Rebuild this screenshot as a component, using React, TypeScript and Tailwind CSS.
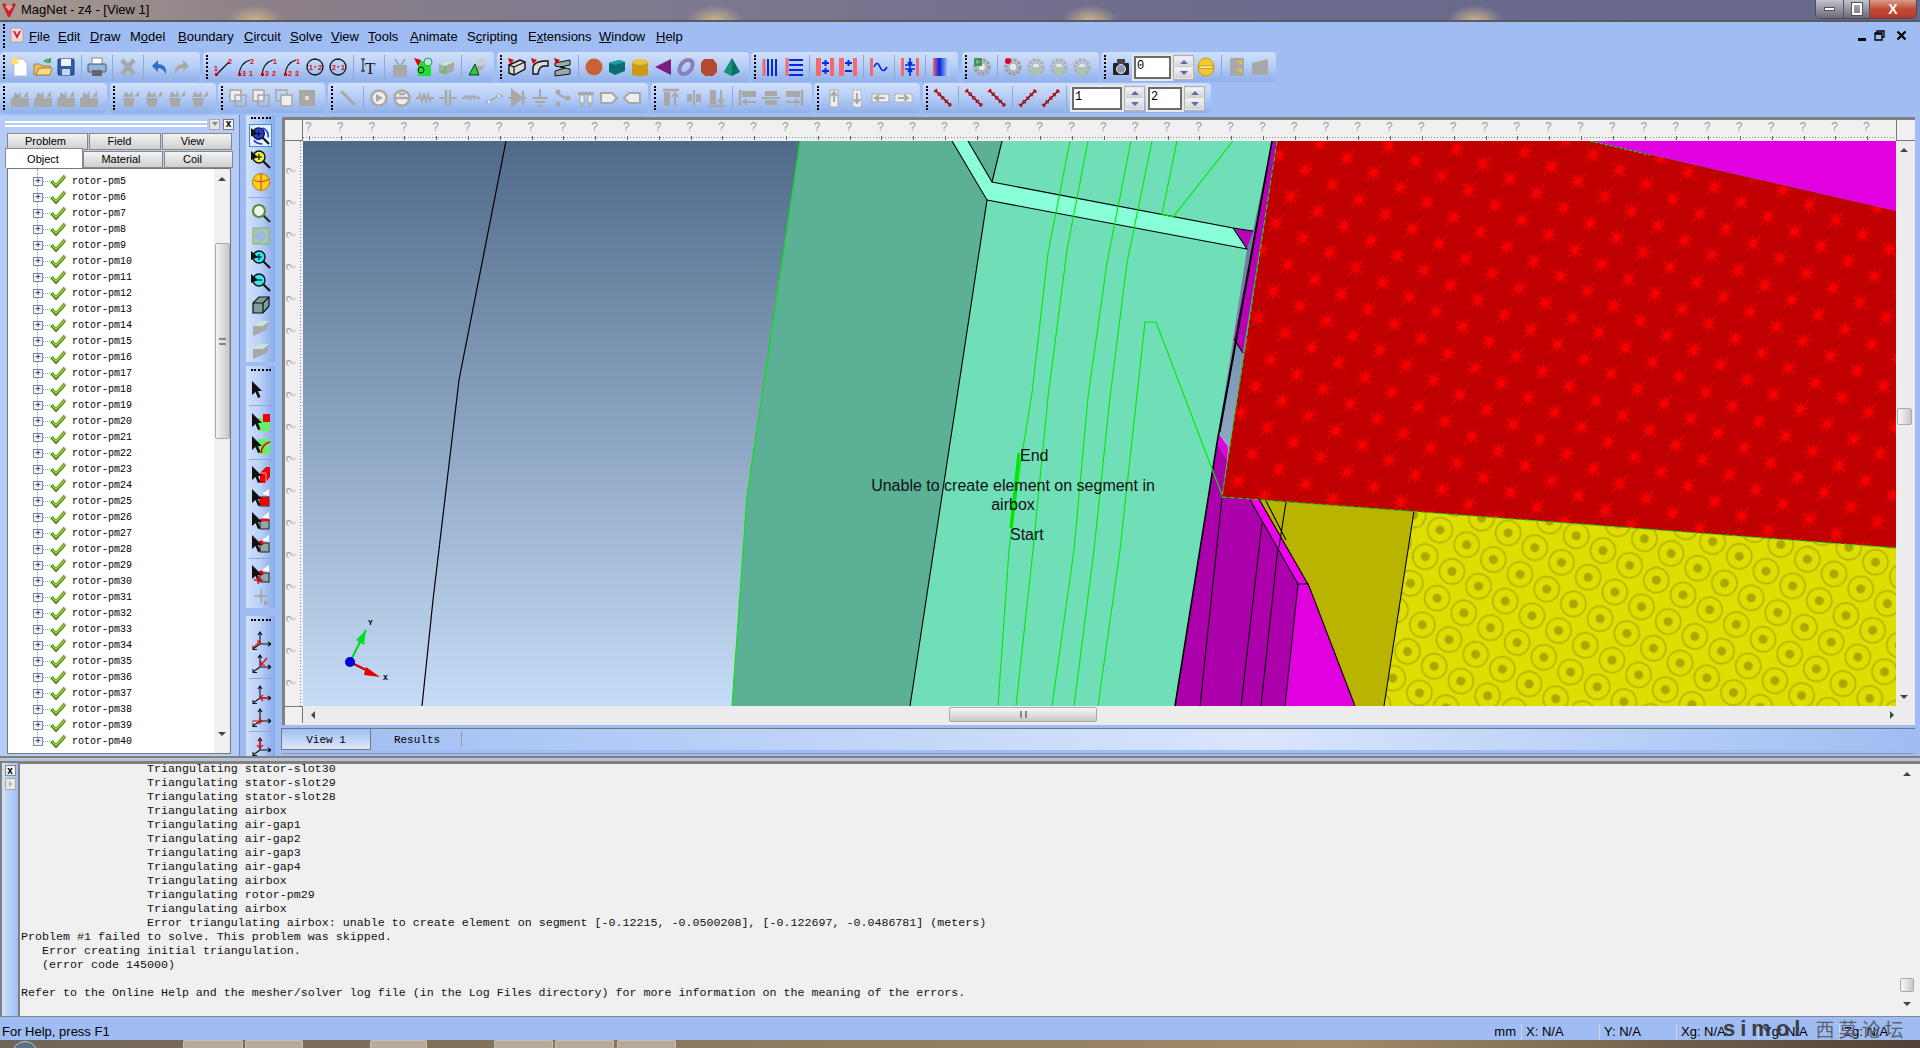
import type { ReactNode } from 'react';

const G = '#a8a8a8';

const num = (x: number, y: number, t: string, c = '#e00000') => (
  <text x={x} y={y} fontSize="7" fill={c} fontFamily="Liberation Sans" fontWeight="bold">{t}</text>
);

const arc = (a: string, b: string, c: string) => (
  <>
    <path d="M3 18 Q4 6 14 3" fill="none" stroke="#111" strokeWidth="1.3" />
    <rect x="2" y="16" width="3" height="3" fill="#e00000" />
    {num(14, 7, a)}{num(6, 19, b)}{num(13, 19, c)}
  </>
);

const circ = (a: string, b: string) => (
  <>
    <circle cx="10" cy="10" r="8" fill="none" stroke="#111" strokeWidth="1.3" />
    {num(4, 13, a)}{num(13, 13, b)}
    <rect x="9.5" y="9" width="1.5" height="1.5" fill="#e00000" />
  </>
);

const gear = (c: string, extra?: ReactNode) => (
  <>
    <circle cx="10" cy="10" r="7" fill="none" stroke={c} strokeWidth="3.5" strokeDasharray="3 1.2" />
    <circle cx="10" cy="10" r="4" fill="#e8e8e8" stroke={c} />
    {extra}
  </>
);

const redSide = (
  <rect x="1" y="1" width="5" height="18" fill="#f46a6a" />
);

const grey3 = (
  <>
    <rect x="1" y="10" width="18" height="9" fill={G} />
    <path d="M3 10 L5 4 L8 7 L10 3 L11 10 Z M13 9 L18 3 L18 9 Z" fill={G} />
  </>
);

const grey4 = (
  <>
    <path d="M3 10H15L13 19H5Z" fill={G} />
    <path d="M3 9 L6 3 L9 7 L12 3 L13 9 Z M14 9 L19 3 L19 8 Z" fill={G} />
  </>
);

const copy = (f: string) => (
  <>
    <rect x="2" y="2" width="11" height="11" fill="#eee" stroke={G} strokeWidth="1.6" />
    <rect x="7" y="7" width="11" height="11" fill={f} stroke={G} strokeWidth="1.6" />
  </>
);

const mag = (c: string, sign?: string) => (
  <>
    <path d="M11 11L19 19" stroke="#111" strokeWidth="2.2" />
    <circle cx="8" cy="8" r="6" fill={c} stroke="#111" strokeWidth="1.4" />
    <path d="M0 2L7 8L0 11Z" fill="#111" />
    {sign === '+' && <path d="M5 8H11M8 5V11" stroke="#111" strokeWidth="1.2" />}
    {sign === '-' && <path d="M5 8H11" stroke="#111" strokeWidth="1.2" />}
  </>
);

const arrow = <path d="M1 1V15L4.5 12L7 18L9.5 17L7 11H11Z" fill="#111" />;

const sel = (body: ReactNode) => (
  <>
    {body}
    {arrow}
  </>
);

const boxCut = (
  <>
    <path d="M11 6L18 1V8Z" fill="#fff" />
    <rect x="9" y="9" width="9" height="9" fill="#8fa8a4" stroke="#222" />
  </>
);

const axes = (red: string) => (
  <>
    <path d="M9 14V3M7 5L9 2L11 5M9 14H19M17 12L20 14L17 16M9 14L2 19M2 16V19.5H6" fill="none" stroke="#111" strokeWidth="1.1" />
    <path d={red} fill="none" stroke="#f00000" strokeWidth="1.2" />
  </>
);

const cross = (d: string) => (
  <>
    <path d={d} stroke="#111" strokeWidth="1.2" />
    <path d={d} stroke="#f00000" strokeWidth="4" strokeDasharray="2 3" />
  </>
);

const ICONS: Record<string, ReactNode> = {
  new: (<><path d="M4 2H13L17 6V19H4Z" fill="#fff" stroke="#bbb" /><circle cx="5" cy="4" r="3.5" fill="#ffe060" /></>),
  open: (<><path d="M1 7H7L9 9H17V18H1Z" fill="#e8c060" stroke="#a88430" /><path d="M3 18L6 11H19L17 18Z" fill="#f6d98a" stroke="#a88430" /><path d="M11 5Q14 1 17 4M17 1V5H13" fill="none" stroke="#3c9a3c" strokeWidth="1.6" /></>),
  save: (<><rect x="2" y="2" width="16" height="16" rx="1" fill="#2f5fa8" stroke="#173a73" /><rect x="5" y="2" width="10" height="7" fill="#eef2fa" /><rect x="6" y="12" width="8" height="6" fill="#c9d4e8" /></>),
  print: (<><rect x="5" y="1" width="10" height="7" fill="#fff" stroke="#888" /><rect x="1" y="7" width="18" height="8" rx="1" fill="#8fb5e0" stroke="#555" /><rect x="5" y="13" width="10" height="6" fill="#666" /></>),
  del: (<path d="M4 3L16 17M16 3L4 17" stroke={G} strokeWidth="4.5" />),
  undo: (<path d="M3 9L9 3V7Q18 7 17 17Q14 11 9 11V15Z" fill="#2f6fc0" />),
  redo: (<path d="M17 9L11 3V7Q2 7 3 17Q6 11 11 11V15Z" fill={G} />),
  line: (<><path d="M3 18L16 5" stroke="#111" strokeWidth="1.3" /><rect x="2" y="16" width="3" height="3" fill="#e00000" />{num(1, 14, '1')}{num(15, 7, '2')}</>),
  a1: arc('2', '3', '1'),
  a2: arc('1', '3', '2'),
  a3: arc('1', '2', '3'),
  c1: circ('1', '2'),
  c2: circ('2', '1'),
  text: (<><text x="6" y="17" fontSize="17" fontFamily="Liberation Serif" fill="#111">T</text><path d="M2 2H6M4 2V14M2 14H6" stroke="#111" /></>),
  g1: (<path d="M5 2L9 8M15 2L11 8M4 9H16V19H4Z" fill={G} stroke={G} strokeWidth="2" />),
  sg: (<><rect x="5" y="4" width="13" height="15" fill="#22dd33" /><circle cx="15" cy="5" r="4" fill="#b8e0f0" stroke="#2a2" /><path d="M1 1L8 3L5 9Z" fill="#e00000" /><circle cx="8" cy="13" r="3" fill="none" stroke="#111" /></>),
  g2: (<><path d="M3 7L12 3L18 5V14L9 18L3 15Z" fill={G} /><path d="M12 3L18 5L9 9L3 7Z" fill="#cfe0dc" /><path d="M3 15H9V9" fill="none" stroke="#4c4" strokeWidth="1.6" /></>),
  tool: (<><path d="M4 17L14 5L18 9L8 19Z" fill="#b0b0b0" /><circle cx="14" cy="5" r="4" fill="#ccc" /><path d="M2 18L8 7L12 18Z" fill="#22cc33" stroke="#111" strokeWidth=".8" /></>),
  ext: (<><path d="M2 8L13 3L18 5V12L7 18L2 16Z" fill="#ddd" stroke="#111" strokeWidth="1.4" /><path d="M2 8L7 10V18M7 10L18 5" fill="none" stroke="#111" strokeWidth="1.2" /><path d="M1 1L7 3L3 7Z" fill="#e00000" /></>),
  rev: (<><path d="M3 17V10Q4 5 14 4H18V9H14Q9 9 8 17Z" fill="#ddd" stroke="#111" strokeWidth="1.4" /><path d="M1 1L7 3L3 7Z" fill="#e00000" /></>),
  swp: (<><path d="M2 6L17 3V8L7 10L17 12V17L2 19V14L12 11L2 9Z" fill="#9aa" stroke="#111" /><path d="M1 1L7 3L3 7Z" fill="#e00000" /></>),
  sph: (<circle cx="10" cy="10" r="8.5" fill="#c86038" />),
  cube: (<><path d="M2 6L12 3L18 5V14L8 18L2 15Z" fill="#0c6e70" /><path d="M2 6L12 3L18 5L8 8Z" fill="#18a0a2" /></>),
  cyl: (<><rect x="2" y="5" width="16" height="12" fill="#c89a18" /><ellipse cx="10" cy="5" rx="8" ry="3" fill="#e8c040" /><ellipse cx="10" cy="17" rx="8" ry="2" fill="#c89a18" /></>),
  cone: (<path d="M18 2L2 10L18 18Z" fill="#7c1c7c" />),
  tor: (<ellipse cx="10" cy="10" rx="5.5" ry="8" transform="rotate(40 10 10)" fill="none" stroke="#8880b8" strokeWidth="4" />),
  pol: (<path d="M5 2H14L18 7V15L14 19H6L2 15V6Z" fill="#b84830" />),
  pyr: (<><path d="M10 1L18 15L10 19L2 15Z" fill="#0c7060" /><path d="M10 1L2 15L10 19Z" fill="#18907c" /></>),
  bars: (<><path d="M3 2V19" stroke="#f46a6a" strokeWidth="3" /><path d="M7 2V19M11 2V19M15 2V19" stroke="#0028e8" strokeWidth="2" /></>),
  lines: (<><path d="M3 1V19" stroke="#f46a6a" strokeWidth="3" /><path d="M5 3H19M5 8H19M5 13H19M5 18H19" stroke="#0028e8" strokeWidth="2" /></>),
  pp: (<>{redSide}<rect x="15" y="1" width="4" height="18" fill="#f46a6a" /><path d="M7 6H14M10.5 3V9M7 14H14M10.5 11V17" stroke="#0028e8" strokeWidth="2" /></>),
  pm: (<>{redSide}<rect x="15" y="1" width="4" height="18" fill="#f46a6a" /><path d="M7 6H14M10.5 3V9M7 14H14" stroke="#0028e8" strokeWidth="2" /></>),
  wave: (<><rect x="1" y="1" width="3" height="18" fill="#f46a6a" /><path d="M5 10Q8 3 11 10T18 10" fill="none" stroke="#0028e8" strokeWidth="1.6" /></>),
  conv: (<><rect x="1" y="1" width="3" height="18" fill="#f46a6a" /><rect x="16" y="1" width="3" height="18" fill="#f46a6a" /><path d="M10 1V19M5 8H15M5 12H15M8 5L10 8L12 5M8 15L10 12L12 15" fill="none" stroke="#0028e8" strokeWidth="1.6" /></>),
  grad: (<rect x="2" y="1" width="16" height="18" fill="url(#gradIcon)" />),
  gplay: gear('#a0a0a0', <path d="M2 1H10V9H2Z M4 3V7L8 5Z" fill="#3a9a4a" fillRule="evenodd" />),
  grec: gear('#a0a0a0', <circle cx="5" cy="4" r="3" fill="#e00020" />),
  gdis: gear('#b0b0b0', <rect x="7" y="10" width="6" height="8" fill="#a8c8a8" />),
  cam: (<><rect x="2" y="6" width="16" height="12" rx="1" fill="#222" /><rect x="6" y="2" width="8" height="5" fill="#444" /><circle cx="10" cy="12" r="4.5" fill="#8899bb" stroke="#eee" /></>),
  yel: (<><ellipse cx="10" cy="10" rx="8" ry="9" fill="#f2c830" stroke="#d09a10" /><rect x="3" y="9" width="14" height="2.5" fill="#fff0a0" stroke="#a07808" strokeWidth=".6" /></>),
  film: (<><rect x="3" y="1" width="14" height="18" rx="1" fill="#a8a8a8" /><path d="M9 4H15V8ZM9 12H15V16Z" fill="#f0c030" /></>),
  clap: (<path d="M2 6L18 2V18H2Z" fill={G} />),
  gg1: grey3,
  gg2: grey4,
  cp1: copy('none'),
  cp2: copy('none'),
  cp3: (<><rect x="2" y="2" width="11" height="11" fill="none" stroke={G} strokeWidth="1.6" /><rect x="7" y="7" width="11" height="11" fill="#eee" stroke={G} strokeWidth="1.6" /></>),
  cp4: (<><rect x="2" y="2" width="16" height="16" fill={G} /><rect x="8" y="8" width="4" height="4" fill="#ddd" /></>),
  wrench: (<path d="M4 4L16 16" stroke={G} strokeWidth="3" strokeLinecap="round" />),
  src: (<><circle cx="10" cy="10" r="7.5" fill="#eee" stroke={G} strokeWidth="2.4" /><path d="M7 6V14L14 10Z" fill={G} /></>),
  src2: (<><circle cx="10" cy="10" r="7.5" fill="#eee" stroke={G} strokeWidth="2.4" /><path d="M3 10H17M7 6H13" stroke={G} strokeWidth="2.4" /></>),
  res: (<path d="M1 10H4L5 7L7 13L9 7L11 13L13 7L15 13L16 10H19" fill="none" stroke={G} strokeWidth="2" />),
  cap: (<path d="M1 10H8M8 2V18M12 2V18M12 10H19" fill="none" stroke={G} strokeWidth="2.2" />),
  coil: (<path d="M1 10H4Q5 6 7 10Q8 6 10 10Q11 6 13 10Q14 6 16 10H19" fill="none" stroke={G} strokeWidth="2" />),
  sw: (<><path d="M1 14H5M15 8H19M6 13L14 8" stroke={G} strokeWidth="2" /><circle cx="5" cy="14" r="2" fill="#eee" stroke={G} /><circle cx="15" cy="8" r="2" fill="#eee" stroke={G} /></>),
  dio: (<path d="M1 10H19M5 2V18L15 10ZM16 3V17" fill={G} stroke={G} strokeWidth="2" />),
  gnd: (<path d="M10 1V10M2 10H18M5 14H15M8 18H12" stroke={G} strokeWidth="2" />),
  sw2: (<><circle cx="5" cy="4" r="2.5" fill={G} /><circle cx="15" cy="10" r="2.5" fill={G} /><circle cx="5" cy="16" r="2.5" fill={G} /><path d="M5 6L13 10" stroke={G} strokeWidth="2" /></>),
  rel: (<><rect x="2" y="4" width="16" height="3" fill={G} /><rect x="4" y="7" width="4" height="8" fill="#eee" stroke={G} /><rect x="12" y="7" width="4" height="8" fill="#eee" stroke={G} /><path d="M6 15V19M14 15V19" stroke={G} strokeWidth="2" /></>),
  tagr: (<path d="M2 5H13L18 10L13 15H2Z" fill="#eee" stroke={G} strokeWidth="2.2" />),
  tagl: (<path d="M18 5H7L2 10L7 15H18Z" fill="#eee" stroke={G} strokeWidth="2.2" />),
  al1: (<><path d="M2 2H18" stroke={G} strokeWidth="2.5" /><rect x="3" y="4" width="6" height="14" fill={G} /><path d="M14 18V6M11 9L14 5L17 9" fill="none" stroke={G} strokeWidth="2" /></>),
  al2: (<><rect x="3" y="6" width="5" height="8" fill={G} /><rect x="12" y="6" width="5" height="8" fill={G} /><path d="M10 2V18" stroke={G} strokeWidth="2" /></>),
  al3: (<><path d="M2 18H18" stroke={G} strokeWidth="2.5" /><rect x="3" y="2" width="6" height="14" fill={G} /><path d="M14 2V14M11 11L14 15L17 11" fill="none" stroke={G} strokeWidth="2" /></>),
  al4: (<><path d="M2 2V18" stroke={G} strokeWidth="2.5" /><rect x="4" y="3" width="14" height="6" fill={G} /><path d="M18 14H6M9 11L5 14L9 17" fill="none" stroke={G} strokeWidth="2" /></>),
  al5: (<><rect x="4" y="3" width="12" height="5" fill={G} /><rect x="4" y="12" width="12" height="5" fill={G} /><path d="M1 10H19" stroke={G} strokeWidth="2" /></>),
  al6: (<><path d="M18 2V18" stroke={G} strokeWidth="2.5" /><rect x="2" y="3" width="14" height="6" fill={G} /><path d="M2 14H14M11 11L15 14L11 17" fill="none" stroke={G} strokeWidth="2" /></>),
  sz1: (<><rect x="6" y="2" width="8" height="17" fill="#eee" stroke={G} /><path d="M10 14V5M7 8L10 4L13 8" fill="none" stroke={G} strokeWidth="2" /></>),
  sz2: (<><rect x="6" y="2" width="8" height="17" fill="#eee" stroke={G} strokeDasharray="2 1" /><path d="M10 5V14M7 11L10 15L13 11" fill="none" stroke={G} strokeWidth="2" /></>),
  sz3: (<><rect x="2" y="6" width="17" height="8" fill="#eee" stroke={G} /><path d="M15 10H6M9 7L5 10L9 13" fill="none" stroke={G} strokeWidth="2" /></>),
  sz4: (<><rect x="2" y="6" width="17" height="8" fill="#eee" stroke={G} strokeDasharray="2 1" /><path d="M5 10H14M11 7L15 10L11 13" fill="none" stroke={G} strokeWidth="2" /></>),
  xd: cross('M2 2L18 18'),
  xd2: cross('M2 2L18 18'),
  xu: cross('M2 18L18 2'),
  // vertical toolbar
  vrot: (<>{mag('#2040e0', '+')}<path d="M12 2Q19 5 18 12M3 15Q6 19 12 19" fill="none" stroke="#1030f0" strokeWidth="1.6" /></>),
  vyel: mag('#e8f040', '+'),
  vball: (<><circle cx="10" cy="10" r="8.5" fill="#f8d020" stroke="#b08000" /><path d="M10 2V18M3 8Q10 12 18 7" fill="none" stroke="#e83020" /></>),
  vmag: (<><path d="M12 12L19 19" stroke="#333" strokeWidth="2.4" /><circle cx="8" cy="8" r="6" fill="#eef4e8" stroke="#5c8a3c" strokeWidth="2.2" /></>),
  vfit: (<><rect x="2" y="2" width="16" height="16" fill="#a8cca0" stroke="#8aaa88" /><path d="M10 3L17 10L10 17L3 10Z" fill="#9cb8e0" /></>),
  vin: mag('#30e8f0', '+'),
  vout: mag('#30e8f0', '-'),
  vbox: (<><path d="M2 8L8 2H18V11L12 18H2Z" fill="#7f9f9c" stroke="#111" strokeWidth="1.2" /><path d="M2 8H12V18M12 8L18 2" fill="none" stroke="#111" strokeWidth="1.2" /></>),
  vg: (<><path d="M2 8L18 3L16 12L2 18Z" fill={G} /><path d="M2 8L8 3H18L12 8Z" fill="#c8e4dc" /></>),
  varrow: arrow,
  s1: sel(<><rect x="7" y="6" width="12" height="13" fill="#66ee66" /><path d="M12 2H19V10H12Z" fill="#f00000" /></>),
  s2: sel(<><rect x="7" y="4" width="12" height="15" fill="#66ee66" /><path d="M19 7Q11 9 10 18" fill="none" stroke="#f00000" strokeWidth="1.6" /></>),
  s3: sel(<><path d="M9 8L15 2H19V12L14 18H9Z" fill="#f00000" /><path d="M9 8H15V18" fill="none" stroke="#ffaaaa" /></>),
  s4: sel(<>{boxCut}<rect x="9" y="9" width="9" height="9" fill="#f00000" /></>),
  s5: sel(<>{boxCut}<path d="M9 9H18" stroke="#f00000" strokeWidth="2.5" /></>),
  s6: sel(<>{boxCut}<circle cx="10" cy="9" r="2.5" fill="#f00000" /></>),
  s7: (<>{sel(<>{boxCut}<circle cx="10" cy="9" r="2.5" fill="#f00000" /></>)}<path d="M3 16H12M7 12V20" stroke="#f00000" strokeWidth="1.4" /></>),
  s8: (<><path d="M10 2V16M3 9H17" stroke={G} strokeWidth="1.6" /><circle cx="10" cy="9" r="2" fill={G} /><path d="M13 13L19 16L13 19Z" fill={G} /></>),
  ax1: axes('M2 18L9 11M6 11H9V14'),
  ax2: axes('M16 5L10 12M10 8V12H14'),
  ax3: axes('M9 14H19M12 11L9 14L12 17'),
  ax4: axes('M1 14H11M8 11L11 14L8 17'),
  ax5: axes('M9 2V12M6 9L9 12L12 9'),
};

type Item = string | { input: string; w: number; ml?: number };

const row1: { w: number; ml: number; items: Item[] }[] = [
  { w: 200, ml: 0, items: ['new', 'open', 'save', 'sep', 'print', 'sep', 'del', 'sep', 'undo', 'redo'] },
  { w: 291, ml: 3, items: ['line', 'a1', 'a2', 'a3', 'c1', 'c2', 'sep', 'text', 'sep', 'g1', 'sg', 'g2', 'sep', 'tool'] },
  { w: 252, ml: 3, items: ['ext', 'rev', 'swp', 'sep', 'sph', 'cube', 'cyl', 'cone', 'tor', 'pol', 'pyr'] },
  { w: 207, ml: 2, items: ['bars', 'lines', 'sep', 'pp', 'pm', 'sep', 'wave', 'sep', 'conv', 'sep', 'grad'] },
  { w: 137, ml: 4, items: ['gplay', 'sep', 'grec', 'gdis', 'gdis', 'gdis'] },
  { w: 175, ml: 2, items: ['cam', { input: '0', w: 37, ml: 2 }, 'spin', 'yel', 'sep', 'film', 'clap'] },
];

const row2: { w: number; ml: number; items: Item[] }[] = [
  { w: 107, ml: 0, items: ['gg1', 'gg1', 'gg1', 'gg1'] },
  { w: 106, ml: 3, items: ['gg2', 'gg2', 'gg2', 'gg2'] },
  { w: 107, ml: 2, items: ['cp1', 'cp2', 'cp3', 'cp4'] },
  { w: 320, ml: 3, items: ['wrench', 'sep', 'src', 'src2', 'res', 'cap', 'coil', 'sw', 'dio', 'gnd', 'sw2', 'rel', 'tagr', 'tagl'] },
  { w: 161, ml: 3, items: ['al1', 'al2', 'al3', 'sep', 'al4', 'al5', 'al6'] },
  { w: 106, ml: 2, items: ['sz1', 'sz2', 'sz3', 'sz4'] },
  { w: 288, ml: 3, items: ['xd', 'sep', 'xd2', 'xd2', 'sep', 'xu', 'xu', 'sep', { input: '1', w: 50, ml: 2 }, 'spin', { input: '2', w: 34, ml: 3 }, 'spin'] },
];

function Icon({ name, size = 20 }: { name: string; size?: number }) {
  return (
    <svg width={size} height={size} viewBox="0 0 20 20" className="shrink-0">
      {ICONS[name]}
    </svg>
  );
}

function Spin() {
  return (
    <div className="ml-[2px] flex h-[25px] w-[21px] flex-col gap-px border border-[#b0b0b0] bg-[#e8e8e8] p-px">
      <div className="flex flex-1 items-center justify-center bg-gradient-to-b from-[#f4f4f4] to-[#d0d0d0] text-[#5a6ab0]">
        <div className="h-0 w-0 border-x-[4px] border-b-[4px] border-x-transparent border-b-[#5a6ab0]" />
      </div>
      <div className="flex flex-1 items-center justify-center bg-gradient-to-b from-[#f4f4f4] to-[#d0d0d0]">
        <div className="h-0 w-0 border-x-[4px] border-t-[4px] border-x-transparent border-t-[#5a6ab0]" />
      </div>
    </div>
  );
}

function Grip() {
  return (
    <div className="flex w-[8px] shrink-0 justify-center">
      <div className="h-[24px] border-l-2 border-dotted border-black" />
    </div>
  );
}

function ToolGroup({ w, ml, items }: { w: number; ml: number; items: Item[] }) {
  return (
    <div
      style={{ width: w, marginLeft: ml }}
      className="flex h-full items-center rounded-[4px] bg-gradient-to-b from-[#d0e0fb] via-[#b4ccf6] to-[#8fb0ea]"
    >
      <Grip />
      {items.map((it, i) => {
        if (typeof it !== 'string') {
          return (
            <div
              key={i}
              style={{ width: it.w, marginLeft: it.ml }}
              className="h-[23px] border-2 border-[#6b6b6b] bg-white pl-px font-['Liberation_Mono'] text-[12px] leading-[17px] text-black shadow-[0_0_0_2px_#e8e8e8]"
            >
              {it.input}
            </div>
          );
        }
        if (it === 'spin') return <Spin key={i} />;
        if (it === 'sep') {
          return (
            <div key={i} className="flex w-[8px] shrink-0 justify-center">
              <div className="h-[24px] w-px bg-[#8fa8d4]" />
            </div>
          );
        }
        return (
          <div key={i} className="flex w-[23px] shrink-0 justify-center">
            <Icon name={it} />
          </div>
        );
      })}
    </div>
  );
}

const menus: [string, string, string, number][] = [
  ['', 'F', 'ile', 29],
  ['', 'E', 'dit', 32],
  ['', 'D', 'raw', 40],
  ['M', 'o', 'del', 48],
  ['', 'B', 'oundary', 66],
  ['', 'C', 'ircuit', 46],
  ['', 'S', 'olve', 41],
  ['', 'V', 'iew', 37],
  ['', 'T', 'ools', 42],
  ['', 'A', 'nimate', 57],
  ['S', 'c', 'ripting', 61],
  ['E', 'x', 'tensions', 71],
  ['', 'W', 'indow', 57],
  ['', 'H', 'elp', 30],
];

function TitleBar() {
  return (
    <div className="flex h-[22px] shrink-0 items-center justify-between border-b-2 border-b-[#5a5a60] bg-[radial-gradient(ellipse_28px_16px_at_255px_21px,#cdb58a,transparent),radial-gradient(ellipse_28px_16px_at_715px_21px,#cdb58a,transparent),radial-gradient(ellipse_28px_16px_at_1090px_21px,#cdb58a,transparent),radial-gradient(ellipse_28px_16px_at_1475px_21px,#cdb58a,transparent),linear-gradient(90deg,#a89c92,#8d8088_250px,#7c7890_700px,#6a6a8c_1300px,#66688c)]">
      <div className="flex items-center">
        <svg width="16" height="16" viewBox="0 0 16 16" className="ml-[1px]">
          <path d="M1 2L4 1L8 9L12 1L15 2L9 15H7Z" fill="#d02030" />
          <path d="M4 4H12L8 9Z" fill="#f0a0a0" />
        </svg>
        <span className="ml-[4px] text-[13px] text-black">MagNet - z4 - [View 1]</span>
      </div>
      <div className="mr-[3px] flex h-[19px] w-[102px] self-start overflow-hidden rounded-b-[5px] border border-t-0 border-[#4a4a58]">
        <div className="flex w-[28px] items-center justify-center border-r border-[#555] bg-gradient-to-b from-[#c4c4cc] to-[#6a6a7c]">
          <div className="h-[4px] w-[11px] border border-[#555] bg-white" />
        </div>
        <div className="flex w-[26px] items-center justify-center border-r border-[#555] bg-gradient-to-b from-[#c4c4cc] to-[#6a6a7c]">
          <div className="h-[12px] w-[10px] border-2 border-white outline outline-1 outline-[#555]" />
        </div>
        <div className="flex flex-1 items-center justify-center bg-gradient-to-b from-[#d89a8c] via-[#c04a34] to-[#b83a28] text-[14px] font-bold text-white">
          X
        </div>
      </div>
    </div>
  );
}

function MenuBar() {
  return (
    <div className="relative flex h-[28px] shrink-0 items-center text-[13px] text-black">
      <div className="ml-[3px] h-[24px] border-l-2 border-dotted border-black" />
      <svg width="14" height="16" viewBox="0 0 14 16" className="absolute left-[10px] top-[5px]">
        <path d="M1 1H10L13 4V15H1Z" fill="#f4d8d8" stroke="#b8a0a0" />
        <path d="M3 4L7 12L11 4H9L7 8L5 4Z" fill="#d02030" />
      </svg>
      <div className="ml-[24px] flex pt-[2px]">
        {menus.map(([pre, ul, post, w], i) => (
          <span key={i} style={{ width: w }} className="shrink-0 whitespace-nowrap">
            {pre}
            <span className="underline">{ul}</span>
            {post}
          </span>
        ))}
      </div>
      <div className="absolute left-[1858px] top-[5px] flex h-[16px] items-center gap-[8px]">
        <div className="mt-[8px] h-[3px] w-[8px] bg-black" />
        <svg width="11" height="11" viewBox="0 0 11 11">
          <path d="M3 3V1H10V7H8M1 3H8V10H1Z M1 4H8" fill="none" stroke="#000" strokeWidth="1.3" />
        </svg>
        <svg width="11" height="11" viewBox="0 0 11 11" className="ml-[3px]">
          <path d="M1.5 1.5L9.5 9.5M9.5 1.5L1.5 9.5" stroke="#000" strokeWidth="2.2" />
        </svg>
      </div>
    </div>
  );
}

function Tab({ label, w, pr = 0, active }: { label: string; w: number; pr?: number; active?: boolean }) {
  return (
    <div
      style={{ width: w, paddingRight: pr }}
      className={
        active
          ? "relative z-10 flex h-[20px] items-start justify-center border border-b-0 border-[#888] bg-white pt-[2px] text-[11px] text-black"
          : "flex h-[17px] items-center justify-center border border-[#888] bg-gradient-to-b from-[#f4f4f4] to-[#cfcfcf] text-[11px] text-black"
      }
    >
      {label}
    </div>
  );
}

const pms = Array.from({ length: 36 }, (_, i) => `rotor-pm${i + 5}`);

function LeftPanel() {
  return (
    <div className="flex w-[240px] shrink-0 flex-col border-r border-[#6f87b5] bg-[#b4ccf6] pb-[2px] pl-[2px] pr-[3px]">
      <div className="flex h-[18px] shrink-0 items-center pl-[3px]">
        <div className="h-[6px] w-[202px] border-y-2 border-white" />
        <div className="ml-[2px] flex h-[11px] w-[11px] items-center justify-center border border-[#aaa] bg-[#e4e4e4]">
          <div className="h-0 w-0 border-x-[3px] border-t-[4px] border-x-transparent border-t-[#888]" />
        </div>
        <div className="ml-[3px] flex h-[11px] w-[11px] items-center justify-center border border-[#777] bg-[#f4f4f4] text-[10px] font-bold leading-none text-black">
          x
        </div>
      </div>
      <div className="flex shrink-0 pl-[5px]">
        <Tab label="Problem" w={81} pr={4} />
        <div className="w-px" />
        <Tab label="Field" w={72} pr={11} />
        <div className="w-px" />
        <Tab label="View" w={70} pr={9} />
      </div>
      <div className="mt-[-2px] flex h-[20px] shrink-0 items-end pl-[3px]">
        <Tab label="Object" w={78} pr={2} active />
        <Tab label="Material" w={80} pr={4} />
        <div className="w-px" />
        <Tab label="Coil" w={69} pr={12} />
      </div>
      <div className="mx-[5px] flex min-h-0 flex-1 border border-[#777] bg-white">
        <div className="relative flex-1 overflow-hidden pt-[4px]">
          <div className="absolute bottom-[8px] left-[29px] top-0 border-l border-dotted border-[#999]" />
          {pms.map((p) => (
            <div key={p} className="relative flex h-[16px] items-center pl-[25px]">
              <div className="flex h-[9px] w-[10px] items-center justify-center border border-[#888] bg-[#f0f4fa] text-[9px] font-bold leading-none text-[#2a4aa0]">
                +
              </div>
              <div className="w-[7px] border-t border-dotted border-[#999]" />
              <svg width="16" height="14" viewBox="0 0 16 14">
                <path d="M1.5 7L6 12L15 2" fill="none" stroke="#4f7f18" strokeWidth="3.4" />
                <path d="M2 7L6 11L14.5 2.5" fill="none" stroke="#9ad43c" strokeWidth="1.6" />
              </svg>
              <span className="ml-[6px] font-['Liberation_Mono'] text-[10px] text-black">{p}</span>
            </div>
          ))}
        </div>
        <div className="flex w-[16px] shrink-0 flex-col items-center bg-[#f0f0f0]">
          <div className="mt-[8px] h-0 w-0 border-x-[4px] border-b-[4px] border-x-transparent border-b-[#444]" />
          <div className="mt-[62px] flex h-[196px] w-[15px] items-center justify-center rounded-[2px] border border-[#aaa] bg-gradient-to-r from-[#f4f4f4] to-[#c8c8c8]">
            <div className="h-[7px] w-[7px] border-y-2 border-[#888]" />
          </div>
          <div className="mt-[293px] h-0 w-0 border-x-[4px] border-t-[4px] border-x-transparent border-t-[#444]" />
        </div>
      </div>
    </div>
  );
}

const VT: (string | number)[] = [
  'grip1', 'vrot', 'vyel', 'vball', 8, 'vmag', 'vfit', 'vin', 'vout', 'vbox', 'vg', 'vg', 'break', 'grip2', 'varrow', 9, 's1', 's2', 7,
  's3', 's4', 's5', 's6', 7, 's7', 's8', 'break2', 'grip2', 'ax1', 'ax2', 8, 'ax3', 'ax4', 6, 'ax5',
];

function VerticalToolbar() {
  return (
    <div className="ml-[6px] flex w-[29px] shrink-0 flex-col items-center overflow-hidden bg-gradient-to-r from-[#d4e2fb] via-[#b8cff7] to-[#88a9e8]">
      {VT.map((it, i) => {
        if (typeof it === 'number') {
          return (
            <div key={i} style={{ height: it }} className="flex w-full shrink-0 items-center justify-center">
              <div className="h-px w-[23px] bg-[#8fa8d4]" />
            </div>
          );
        }
        if (it === 'grip1' || it === 'grip2') {
          return (
            <div key={i} className={it === 'grip1' ? 'flex h-[9px] w-full shrink-0 justify-center pt-[2px]' : 'flex h-[12px] w-full shrink-0 justify-center pt-[3px]'}>
              <div className="h-0 w-[20px] border-t-2 border-dotted border-black" />
            </div>
          );
        }
        if (it === 'break' || it === 'break2') {
          return <div key={i} className={it === 'break' ? 'h-[4px] w-full shrink-0 bg-[#9fbdf3]' : 'h-[8px] w-full shrink-0 bg-[#9fbdf3]'} />;
        }
        return (
          <div
            key={i}
            className={
              it === 'vrot'
                ? 'flex h-[23px] w-[23px] shrink-0 items-center justify-center border border-[#3a8cf0] bg-[#e4eefd]'
                : 'flex h-[23px] w-full shrink-0 items-center justify-center'
            }
          >
            <Icon name={it} size={it === 'vrot' ? 19 : 20} />
          </div>
        );
      })}
    </div>
  );
}

const star = (() => {
  const pts: string[] = [];
  const radii = [15, 6, 11, 6, 14, 6, 10, 6, 15, 6, 11, 6, 14, 6, 10, 6];
  radii.forEach((r, i) => {
    const a = (i / radii.length) * Math.PI * 2 + 0.25;
    const k = i % 2 === 0 ? r : 3.4;
    pts.push(`${(15.25 + Math.sin(a) * k * 0.8).toFixed(1)},${(15.25 - Math.cos(a) * k).toFixed(1)}`);
  });
  return pts.join(' ');
})();

function Motor() {
  return (
    <svg width="1593" height="565" viewBox="303 141 1593 565" className="block shrink-0">
      <defs>
        <linearGradient id="bgGrad" x1="0" y1="0" x2="0" y2="1">
          <stop offset="0" stopColor="#4f6a8a" />
          <stop offset="1" stopColor="#c6dcf6" />
        </linearGradient>
        <pattern id="redPat" patternUnits="userSpaceOnUse" width="30.5" height="30.5" patternTransform="translate(1347 158) rotate(29) translate(-15.25 -15.25)">
          <rect width="30.5" height="30.5" fill="#c00000" />
          <path d="M15.25 0V30.5" stroke="#ac0000" strokeWidth="1" />
          <polygon points={star} fill="#f80000" />
        </pattern>
        <pattern id="yelPat" patternUnits="userSpaceOnUse" width="30.5" height="30.5" patternTransform="translate(1440 530) rotate(29) translate(-15.25 -15.25)">
          <rect width="30.5" height="30.5" fill="#dede00" />
          <circle cx="15.25" cy="15.25" r="12.5" fill="none" stroke="#aca800" strokeWidth="1.7" strokeDasharray="1.6 .5" />
          <circle cx="15.25" cy="15.25" r="4.5" fill="#aca800" />
        </pattern>
      </defs>

      <rect x="303" y="141" width="1593" height="565" fill="url(#bgGrad)" />
      <path d="M506 141L459 380L433 600L422 706" fill="none" stroke="#000" strokeWidth="1.2" />

      <polygon points="800,141 952,141 987,200 910,706 732,706 747,496" fill="#5bb096" />
      <polygon points="968,141 1002,141 992,182" fill="#5bb096" />
      <polygon points="1002,141 1272,141 1253,231 1233,228 992,182" fill="#70dfb8" />
      <polygon points="987,200 1247,249 1200,550 1175,706 910,706" fill="#70dfb8" />
      <polygon points="952,141 968,141 992,182 1233,228 1247,249 987,200" fill="#88ffd8" />

      <polygon points="1272,141 1277,141 1243,352 1234,339" fill="#b800b8" />
      <polygon points="1235,229 1253,231 1247,248" fill="#b800b8" />
      <polygon points="1218,433 1228,447 1227,460 1217,443" fill="#e000e0" />
      <polygon points="1217,443 1227,460 1222,497 1249,498 1298,584 1285,706 1175,706" fill="#ac00ac" />
      <polygon points="1249,498 1259,499 1309,586 1298,584" fill="#f000f0" />
      <polygon points="1298,584 1309,586 1355,706 1285,706" fill="#e000e0" />
      <polygon points="1259,499 1414,511 1384,706 1355,706 1309,586" fill="#b8b400" />
      <polygon points="1592,141 1896,141 1896,211" fill="#e000e0" />
      <polygon points="1414,511 1896,548 1896,706 1384,706" fill="url(#yelPat)" />
      <polygon points="1277,141 1590,141 1896,211 1896,548 1222,497" fill="url(#redPat)" />

      <g fill="none" stroke="#000" strokeWidth="1.1">
        <path d="M952 141L987 200L910 706" />
        <path d="M968 141L992 182L1233 228L1247 249L987 200" />
        <path d="M1002 141L992 182" />
        <path d="M1233 228L1253 231" />
        <path d="M1272 141L1217 443L1175 706" strokeWidth="1.6" />
        <path d="M1267 170L1220 432" />
        <path d="M1234 339L1243 353" />
        <path d="M1222 498L1200 706M1262 523L1241 706M1278 547L1261 706M1298 584L1285 706" />
        <path d="M1265 499L1286 540M1286 502L1279 547" />
        <path d="M1249 498L1298 584H1309M1259 499L1309 586L1355 706" />
        <path d="M1414 511L1384 706" />
      </g>

      <g fill="none" stroke="#00e800" strokeWidth="1.1">
        <path d="M800 141L747 496L732 706" />
        <path d="M1070 141L1048 253L1032 393L1020 467L1009 550L998 706" />
        <path d="M1088 141L1067 250L1048 397L1033 550L1016 706" />
        <path d="M1131 141L1107 263L1088 397L1074 550L1052 706" />
        <path d="M1152 141L1127 263L1110 397L1094 550L1074 706" />
        <path d="M1177 141L1162 214L1173 217L1233 141" />
        <path d="M1098 706L1120 550L1145 322L1156 322L1222 495" />
        <path d="M1277 141L1222 497L1896 548" strokeDasharray="5 3" />
        <path d="M1590 141L1650 155" strokeDasharray="3 2" />
        <path d="M1019 453L1011 528" strokeWidth="3.2" />
      </g>

      <path d="M350 662L366 630" stroke="#00d020" strokeWidth="2" />
      <polygon points="366,630 356,640 364,645" fill="#00e020" />
      <path d="M350 662L372 673" stroke="#d00000" strokeWidth="2.5" />
      <polygon points="380,677 366,667 364,675" fill="#e00000" />
      <circle cx="350" cy="662" r="5" fill="#0000e0" />
      <text x="368" y="625" fontSize="8" fontWeight="bold" fontFamily="Liberation Mono" fill="#000">Y</text>
      <text x="383" y="680" fontSize="8" fontWeight="bold" fontFamily="Liberation Mono" fill="#000">X</text>
    </svg>
  );
}

function MainArea() {
  return (
    <div className="ml-[7px] flex min-w-0 flex-1 flex-col pr-[5px] pt-[2px]">
      <div className="flex h-[608px] shrink-0 flex-col border-l-[3px] border-t-[3px] border-[#808080] bg-[#ececec]">
        {/* top ruler */}
        <div className="flex h-[21px] shrink-0">
          <div className="h-full w-[18px] border-b border-r border-[#777] bg-[#f0f0f0]" />
          <div className="relative h-full w-[1593px] shrink-0 overflow-hidden bg-[#f0f0f0]">
            <div className="flex pl-[2px]">
              {Array.from({ length: 50 }, (_, i) => (
                <span key={i} className="w-[31.8px] shrink-0 text-[12px] leading-[14px] text-[#9a9a9a]">?</span>
              ))}
            </div>
            <div className="absolute bottom-[3px] left-0 h-px w-full bg-[repeating-linear-gradient(90deg,#888_0,#888_1px,transparent_1px,transparent_3px)]" />
            <div className="absolute bottom-[1px] left-[6px] h-[4px] w-full bg-[repeating-linear-gradient(90deg,#666_0,#666_1px,transparent_1px,transparent_31.8px)]" />
          </div>
          <div className="h-full flex-1 border-b border-l border-[#777] bg-[#f0f0f0]" />
        </div>
        {/* canvas row */}
        <div className="flex h-[565px] shrink-0">
          <div className="relative h-full w-[18px] shrink-0 overflow-hidden bg-[#f0f0f0] pt-[14px]">
            {Array.from({ length: 17 }, (_, i) => (
              <div key={i} className="flex h-[32px] w-[12px] items-center justify-center">
                <span className="-rotate-90 text-[12px] leading-none text-[#9a9a9a]">?</span>
              </div>
            ))}
            <div className="absolute bottom-0 right-[2px] top-0 w-px bg-[repeating-linear-gradient(180deg,#888_0,#888_1px,transparent_1px,transparent_3px)]" />
          </div>
          <div className="relative h-full w-[1593px] shrink-0 overflow-hidden">
            <Motor />
            <div className="absolute left-[717px] top-[307px] text-[16px] leading-none text-[#111]">End</div>
            <div className="absolute left-[537px] top-[335px] w-[346px] text-center text-[16px] leading-[19px] text-[#111]">
              Unable to create element on segment in
              <br />
              airbox
            </div>
            <div className="absolute left-[707px] top-[386px] text-[16px] leading-none text-[#111]">Start</div>
          </div>
          <div className="flex w-[16px] shrink-0 flex-col items-center bg-[#ececec]">
            <div className="mt-[7px] h-0 w-0 border-x-[4px] border-b-[4px] border-x-transparent border-b-[#444]" />
            <div className="mt-[256px] h-[17px] w-[15px] rounded-[2px] border border-[#aaa] bg-gradient-to-r from-[#f8f8f8] to-[#c8c8c8]" />
            <div className="mt-[270px] h-0 w-0 border-x-[4px] border-t-[4px] border-x-transparent border-t-[#444]" />
          </div>
        </div>
        {/* horizontal scrollbar */}
        <div className="flex h-[19px] shrink-0">
          <div className="h-[17px] w-[18px] shrink-0 border-r border-t border-[#777] bg-[#f0f0f0]" />
          <div className="flex h-[17px] flex-1 items-center bg-[#ececec] pl-[8px]">
            <div className="h-0 w-0 border-y-[4px] border-r-[4px] border-y-transparent border-r-[#444]" />
            <div className="ml-[634px] flex h-[15px] w-[148px] items-center justify-center rounded-[2px] border border-[#aaa] bg-gradient-to-b from-[#f8f8f8] to-[#c8c8c8]">
              <div className="h-[7px] w-[7px] border-x-2 border-[#888]" />
            </div>
            <div className="ml-[793px] h-0 w-0 border-y-[4px] border-l-[4px] border-y-transparent border-l-[#444]" />
          </div>
        </div>
      </div>
      {/* view tabs */}
      <div className="ml-[-1px] mt-[3px] flex h-[22px] shrink-0 items-stretch border-t border-[#777] bg-[linear-gradient(90deg,#9fbdf3,#d8e6fc_60%,#9fbdf3)]">
        <div className="flex w-[90px] items-center justify-center border-x border-b border-[#777] bg-gradient-to-b from-[#9fbdf3] to-[#dde9fd] pt-[2px] font-['Liberation_Mono'] text-[11px] text-black">
          View 1
        </div>
        <div className="flex w-[90px] items-center justify-center pl-[2px] pt-[1px] font-['Liberation_Mono'] text-[11px] text-black">
          Results
        </div>
        <div className="my-[3px] w-px bg-[#999]" />
      </div>
      <div className="mt-[3px] h-px shrink-0 bg-[#8a98b0]" />
    </div>
  );
}

const logLines: [number, string][] = [
  [18, 'Triangulating stator-slot30'],
  [18, 'Triangulating stator-slot29'],
  [18, 'Triangulating stator-slot28'],
  [18, 'Triangulating airbox'],
  [18, 'Triangulating air-gap1'],
  [18, 'Triangulating air-gap2'],
  [18, 'Triangulating air-gap3'],
  [18, 'Triangulating air-gap4'],
  [18, 'Triangulating airbox'],
  [18, 'Triangulating rotor-pm29'],
  [18, 'Triangulating airbox'],
  [18, 'Error triangulating airbox: unable to create element on segment [-0.12215, -0.0500208], [-0.122697, -0.0486781] (meters)'],
  [0, 'Problem #1 failed to solve. This problem was skipped.'],
  [3, 'Error creating initial triangulation.'],
  [3, '(error code 145000)'],
  [0, ' '],
  [0, 'Refer to the Online Help and the mesher/solver log file (in the Log Files directory) for more information on the meaning of the errors.'],
];

function OutputPanel() {
  return (
    <div className="flex h-[254px] shrink-0 border-b border-[#7f8797]">
      <div className="flex w-[18px] shrink-0 flex-col items-center gap-[2px] border-l-2 border-[#808080] bg-gradient-to-r from-[#d4e2fb] to-[#9fbdf3] pt-[2px]">
        <div className="flex h-[11px] w-[11px] items-center justify-center border border-[#888] bg-[#f0f0f0] text-[10px] font-bold leading-none text-black">
          x
        </div>
        <div className="flex h-[12px] w-[11px] items-center justify-center border border-[#aaa] bg-[#e8e8e8]">
          <div className="h-0 w-0 border-y-[3px] border-l-[3px] border-y-transparent border-l-[#aaa]" />
        </div>
      </div>
      <div className="flex min-w-0 flex-1 border-l-2 border-t border-[#808080] bg-[#f0f0f0]">
        <div className="flex-1 overflow-hidden pl-[1px] pt-0">
          <div className="mt-[-2px] font-['Liberation_Mono'] text-[11.67px] leading-[14px] text-[#111]">
            {logLines.map(([indent, t], i) => (
              <div key={i} className="h-[14px] whitespace-pre">
                {' '.repeat(indent)}
                {t}
              </div>
            ))}
          </div>
        </div>
        <div className="mr-[6px] flex w-[14px] shrink-0 flex-col items-center">
          <div className="mt-[8px] h-0 w-0 border-x-[4px] border-b-[4px] border-x-transparent border-b-[#444]" />
          <div className="mt-[202px] h-[14px] w-[14px] rounded-[2px] border border-[#aaa] bg-gradient-to-r from-[#f8f8f8] to-[#c8c8c8]" />
          <div className="mt-[10px] h-0 w-0 border-x-[4px] border-t-[4px] border-x-transparent border-t-[#444]" />
        </div>
      </div>
    </div>
  );
}

function StatusBar() {
  const cells: [string, number][] = [
    ['X: N/A', 78],
    ['Y: N/A', 77],
    ['Xg: N/A', 82],
    ['Yg: N/A', 81],
    ['Zg: N/A', 81],
  ];
  return (
    <div className="relative flex h-[23px] shrink-0 items-center bg-[#9fbdf3] pt-[7px] text-[13px] text-black">
      <span className="ml-[2px] flex-1">For Help, press F1</span>
      <span className="mr-[5px]">mm</span>
      {cells.map(([t, w]) => (
        <div key={t} style={{ width: w }} className="flex h-[16px] items-center border-l border-[#c8d8f4] pl-[4px]">
          {t}
        </div>
      ))}
      <div className="absolute left-[1723px] top-[2px] flex items-center">
        <span className="text-[22px] font-bold leading-[20px] tracking-[5px] text-[#3c3c44]">simol</span>
        <span className="ml-[10px] font-['Noto_Sans_CJK_SC',sans-serif] text-[19px] leading-[20px] tracking-[4px] text-[#60606c]">西莫论坛</span>
      </div>
    </div>
  );
}

function TaskBar() {
  const btns: [number, number][] = [
    [183, 60],
    [2, 58],
    [67, 57],
    [67, 59],
    [2, 59],
    [3, 59],
  ];
  return (
    <div className="flex h-[8px] shrink-0 overflow-hidden bg-[linear-gradient(90deg,#6f6458,#8d7a60_40%,#a08a68_70%,#4e4038)]">
      <div className="absolute ml-[12px] mt-[1px] h-[26px] w-[26px] rounded-full border border-[#b8c8d8] bg-[#5a6f85]" />
      {btns.map(([ml, w], i) => (
        <div key={i} style={{ marginLeft: ml, width: w }} className="h-full rounded-t-[2px] border border-b-0 border-[#c9c2b4] bg-[#b6aa98]" />
      ))}
    </div>
  );
}

export default function App() {
  return (
    <div className="flex h-[1048px] w-[1920px] flex-col overflow-hidden bg-[#9fbdf3] font-['Liberation_Sans',sans-serif]">
      <svg width="0" height="0" className="absolute">
        <defs>
          <linearGradient id="gradIcon" x1="0" y1="0" x2="1" y2="0">
            <stop offset="0" stopColor="#f46a6a" />
            <stop offset=".4" stopColor="#0028e8" />
            <stop offset="1" stopColor="#cfe0fb" />
          </linearGradient>
        </defs>
      </svg>
      <TitleBar />
      <MenuBar />
      <div className="mt-[2px] flex h-[30px] shrink-0">
        {row1.map((g, i) => (
          <ToolGroup key={i} {...g} />
        ))}
      </div>
      <div className="mt-[1px] flex h-[30px] shrink-0">
        {row2.map((g, i) => (
          <ToolGroup key={i} {...g} />
        ))}
      </div>
      <div className="mt-[2px] flex h-[641px] shrink-0">
        <LeftPanel />
        <VerticalToolbar />
        <MainArea />
      </div>
      <div className="h-[7px] shrink-0 border-y-2 border-[#808080] bg-[#b8c4d8]" />
      <OutputPanel />
      <StatusBar />
      <TaskBar />
    </div>
  );
}
